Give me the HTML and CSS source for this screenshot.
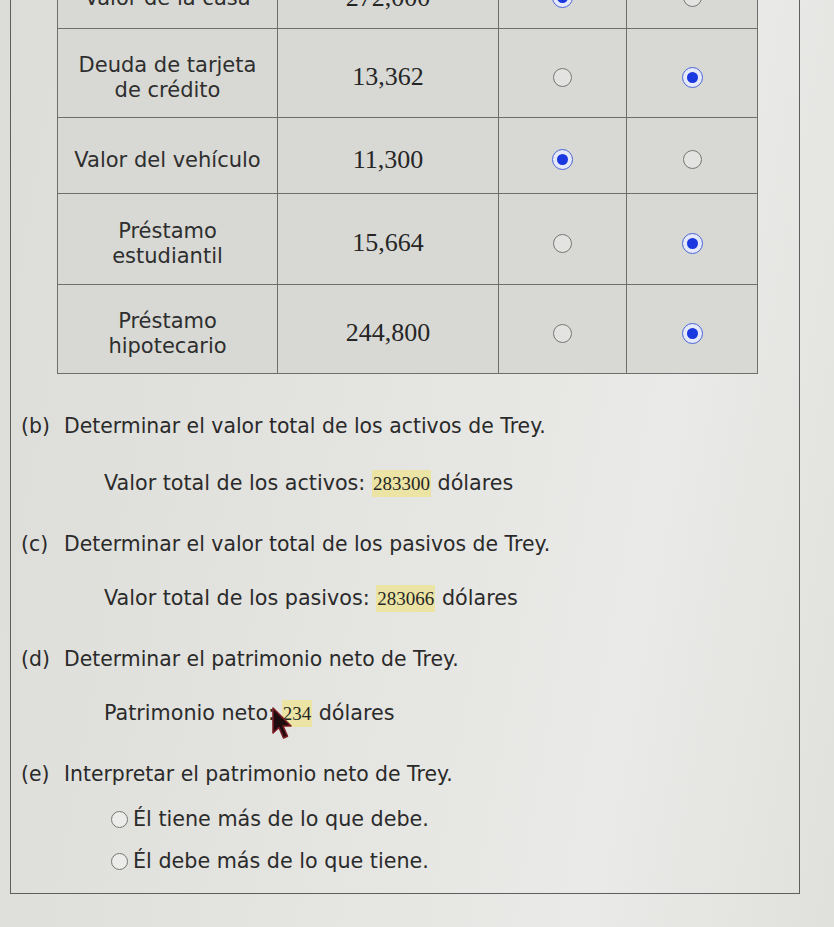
FILE: index.html
```html
<!DOCTYPE html>
<html lang="es">
<head>
<meta charset="utf-8">
<title>Patrimonio neto</title>
<link rel="stylesheet" href="styles.css">
</head>
<body>
<div class="frame">
  <table class="assets">
    <colgroup>
      <col class="c1"><col class="c2"><col class="c3"><col class="c4">
    </colgroup>
    <tr class="r0">
      <td class="label">Valor de la casa</td>
      <td class="num">272,000</td>
      <td><span class="radio on"></span></td>
      <td><span class="radio"></span></td>
    </tr>
    <tr class="r1">
      <td class="label">Deuda de tarjeta<br>de crédito</td>
      <td class="num">13,362</td>
      <td><span class="radio"></span></td>
      <td><span class="radio on"></span></td>
    </tr>
    <tr class="r2">
      <td class="label">Valor del vehículo</td>
      <td class="num">11,300</td>
      <td><span class="radio on"></span></td>
      <td><span class="radio"></span></td>
    </tr>
    <tr class="r3">
      <td class="label">Préstamo<br>estudiantil</td>
      <td class="num">15,664</td>
      <td><span class="radio"></span></td>
      <td><span class="radio on"></span></td>
    </tr>
    <tr class="r4">
      <td class="label">Préstamo<br>hipotecario</td>
      <td class="num">244,800</td>
      <td><span class="radio"></span></td>
      <td><span class="radio on"></span></td>
    </tr>
  </table>

  <div class="question q-b"><span class="tag">(b)</span><span>Determinar el valor total de los activos de Trey.</span></div>
  <div class="answer a-b">Valor total de los activos: <span class="hl">283300</span> dólares</div>

  <div class="question"><span class="tag">(c)</span><span>Determinar el valor total de los pasivos de Trey.</span></div>
  <div class="answer">Valor total de los pasivos: <span class="hl">283066</span> dólares</div>

  <div class="question"><span class="tag">(d)</span><span>Determinar el patrimonio neto de Trey.</span></div>
  <div class="answer">Patrimonio neto: <span class="hl">234</span> dólares</div>

  <div class="question"><span class="tag">(e)</span><span>Interpretar el patrimonio neto de Trey.</span></div>
  <div class="options">
    <div class="option"><span class="radio small"></span><span>Él tiene más de lo que debe.</span></div>
    <div class="option"><span class="radio small"></span><span>Él debe más de lo que tiene.</span></div>
  </div>

  <svg class="cursor" width="22" height="34" viewBox="0 0 22 34" aria-hidden="true">
    <path d="M2 1 L2 26 L8 20.5 L12.5 31 L16.5 29.2 L12 19 L20 19 Z" fill="#1e0c0e" stroke="#7a1d25" stroke-width="1.6" stroke-linejoin="round"/>
  </svg>
</div>
</body>
</html>
```

FILE: styles.css
```css
html, body {
  margin: 0;
  padding: 0;
}

body {
  background: linear-gradient(100deg, #dcdcd8 0%, #e4e4e1 45%, #eaeae8 75%, #e0e0dd 100%);
  font-family: "DejaVu Sans", Verdana, sans-serif;
  font-size: 20.7px;
  color: #2b2b2b;
  height: 927px;
  overflow: hidden;
}

.frame {
  display: flow-root;
  position: relative;
  margin-left: 10px;
  width: 790px;
  border-left: 1.5px solid #5e5e5e;
  border-right: 1.5px solid #5e5e5e;
  border-bottom: 1.5px solid #5e5e5e;
  padding-bottom: 20px;
  box-sizing: border-box;
}

.assets {
  margin-top: -42px;
  margin-left: 46px;
  width: 700px;
  border-collapse: collapse;
  table-layout: fixed;
  border: 1.5px solid #6e6e6e;
}

.c1 { width: 220px; }
.c2 { width: 221px; }
.c3 { width: 128px; }
.c4 { width: 131px; }

.assets td {
  border: 1.5px solid #6e6e6e;
  background: #d8d9d5;
  text-align: center;
  vertical-align: middle;
  padding: 7px 6px 0;
  line-height: 25px;
}

.r0 { height: 70px; }
.r1 { height: 89px; }
.r2 { height: 76px; }
.r3 { height: 91px; }
.r4 { height: 89px; }

.assets .label {
  font-size: 21px;
  color: #2e2e2e;
  padding-top: 9px;
}

.assets .num {
  font-family: "Liberation Serif", "Times New Roman", serif;
  font-size: 26px;
  color: #262626;
}

.radio {
  display: inline-block;
  box-sizing: border-box;
  width: 19px;
  height: 19px;
  border-radius: 50%;
  border: 1.5px solid #767676;
  background: #e3e3e1;
  vertical-align: middle;
  position: relative;
}

.radio.on {
  width: 21px;
  height: 21px;
  border: 1.5px solid #4a63d6;
  background: #e6e9fa;
}

.radio.on::after {
  content: "";
  position: absolute;
  left: 50%;
  top: 50%;
  width: 11px;
  height: 11px;
  margin: -5.5px 0 0 -5.5px;
  border-radius: 50%;
  background: #1a37e0;
}

.question {
  display: flex;
  align-items: center;
  margin-top: 35px;
  padding-left: 10px;
  font-size: 20.4px;
  line-height: 24px;
  color: #2a2a2a;
}

.q-b {
  margin-top: 40px;
}

.tag {
  width: 43px;
  flex: none;
}

.answer {
  margin-top: 29px;
  padding-left: 93px;
  line-height: 24px;
  color: #2b2b2b;
}

.a-b {
  margin-top: 32px;
}

.hl {
  display: inline-block;
  font-family: "Liberation Serif", "Times New Roman", serif;
  font-size: 19px;
  line-height: 27px;
  background: #ebe4a4;
  padding: 0 1px;
  color: #262626;
}

.options {
  margin-top: 21px;
  padding-left: 100px;
  display: flex;
  flex-direction: column;
  gap: 18px;
}

.option {
  display: flex;
  align-items: center;
  gap: 5px;
  line-height: 24px;
}

.radio.small {
  width: 17px;
  height: 17px;
  background: #ececea;
}

.cursor {
  position: absolute;
  left: 260px;
  top: 707px;
}
```
